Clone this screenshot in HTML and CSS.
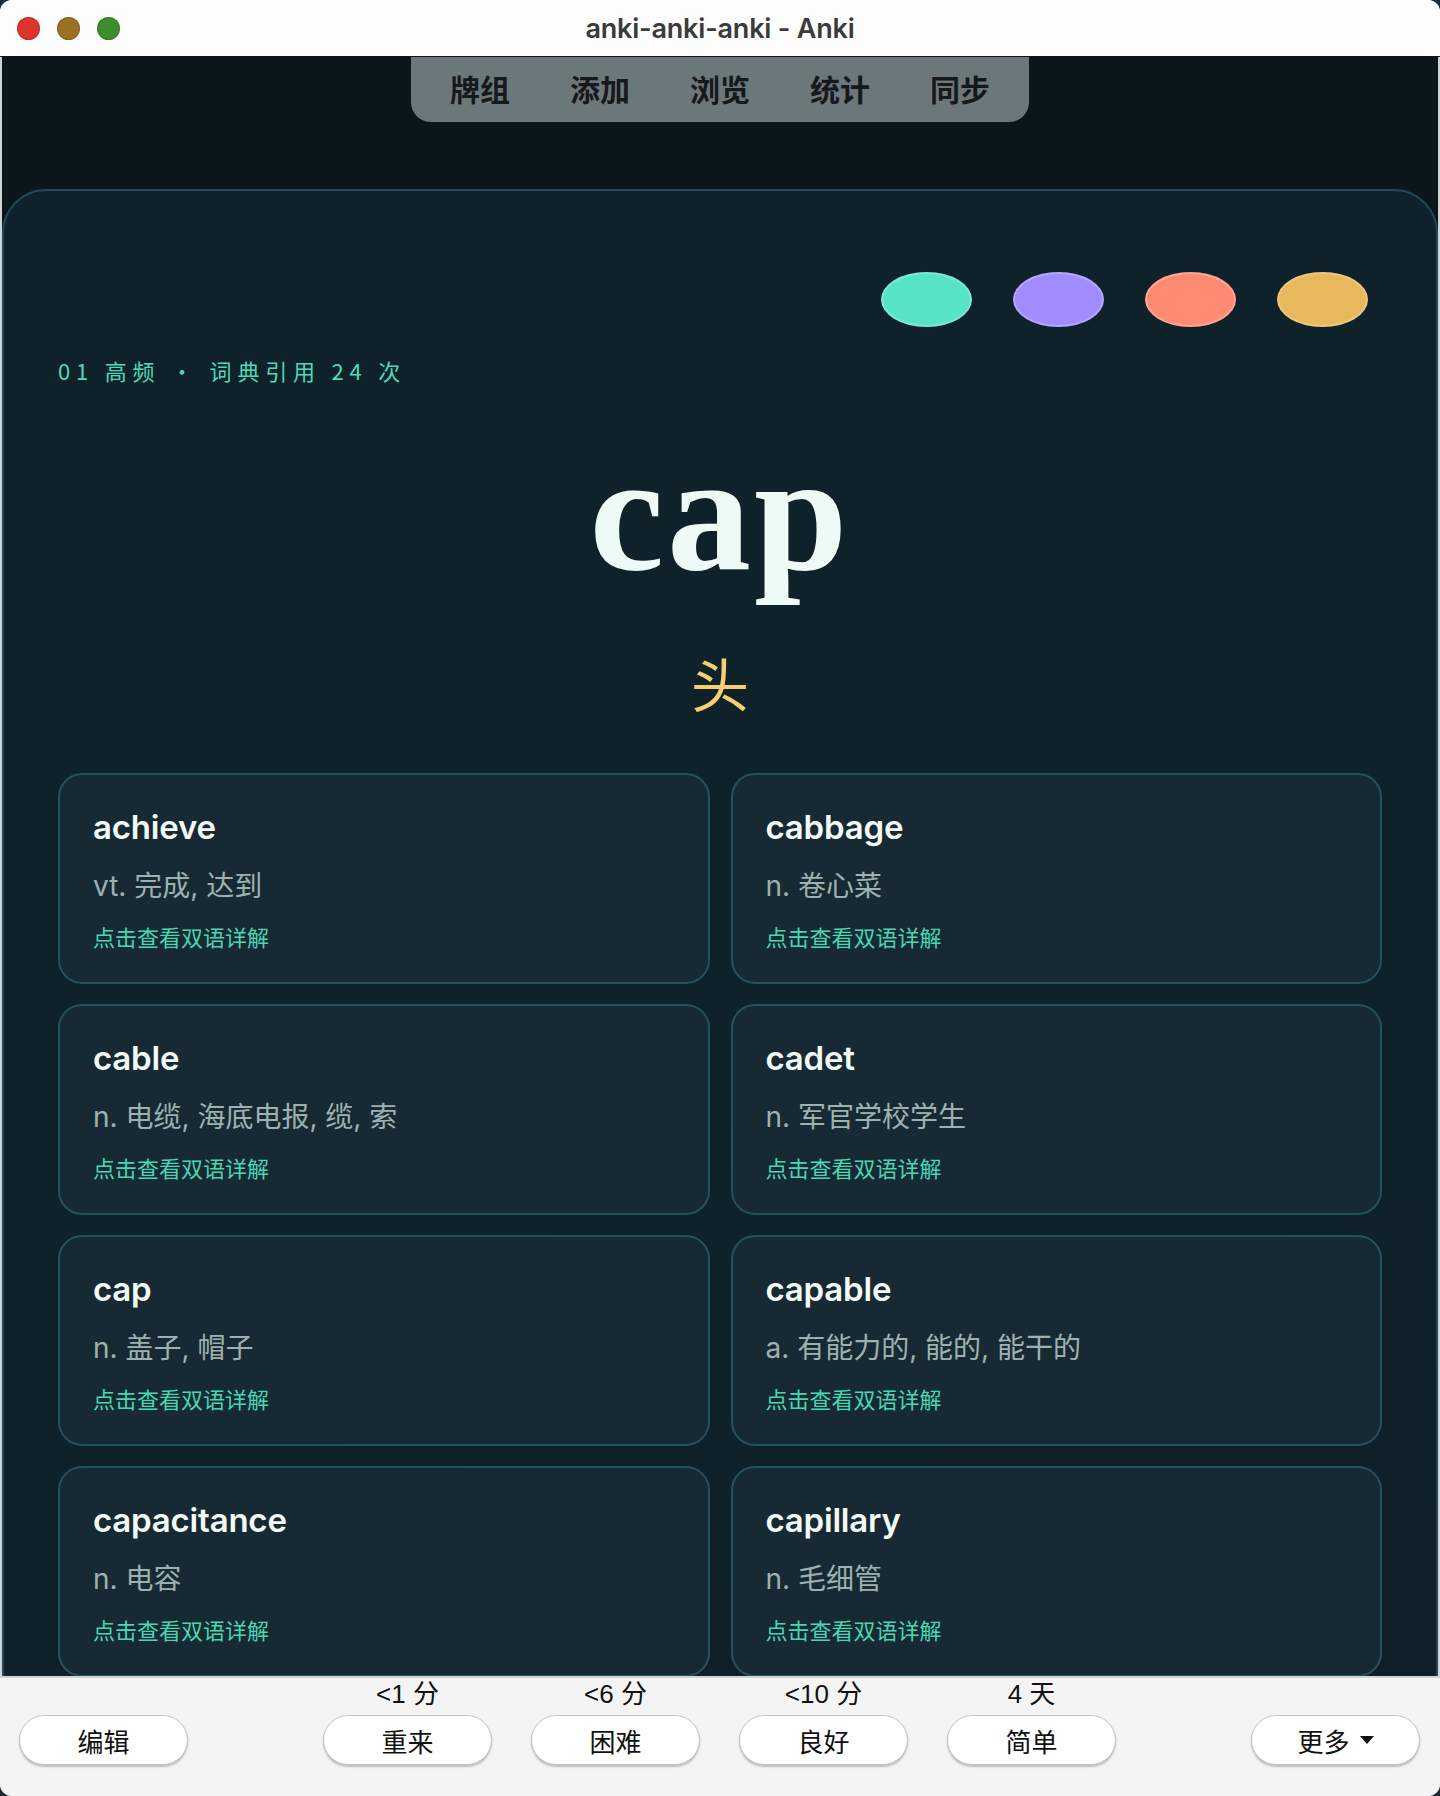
FILE: index.html
```html
<!DOCTYPE html>
<html>
    <head>
        <meta charset="utf-8">
        <title>anki-anki-anki - Anki</title>
        <link rel="stylesheet" href="styles.css">
    </head>

    <body>
        <div class="window">
            <header class="titlebar">
                <div class="lights">
                    <span class="light light-close"></span>
                    <span class="light light-min"></span>
                    <span class="light light-zoom"></span>
                </div>
                <div class="title">anki-anki-anki - Anki</div>
                <div></div>
            </header>

            <main class="webview">
                <nav class="toolbar">
                    <div class="toolbar-pill">
                        <a href="#">牌组</a>
                        <a href="#">添加</a>
                        <a href="#">浏览</a>
                        <a href="#">统计</a>
                        <a href="#">同步</a>
                    </div>
                </nav>

                <section class="note">
                    <div class="dots">
                        <span class="dot dot-teal"></span>
                        <span class="dot dot-violet"></span>
                        <span class="dot dot-coral"></span>
                        <span class="dot dot-amber"></span>
                    </div>

                    <div class="meta">01 高频 · 词典引用 24 次</div>

                    <h1 class="headword">cap</h1>
                    <div class="gloss">头</div>

                    <div class="related">
                        <div class="entry">
                            <div class="entry-word">achieve</div>
                            <div class="entry-def">vt. 完成, 达到</div>
                            <a class="entry-link" href="#">点击查看双语详解</a>
                        </div>
                        <div class="entry">
                            <div class="entry-word">cabbage</div>
                            <div class="entry-def">n. 卷心菜</div>
                            <a class="entry-link" href="#">点击查看双语详解</a>
                        </div>
                        <div class="entry">
                            <div class="entry-word">cable</div>
                            <div class="entry-def">n. 电缆, 海底电报, 缆, 索</div>
                            <a class="entry-link" href="#">点击查看双语详解</a>
                        </div>
                        <div class="entry">
                            <div class="entry-word">cadet</div>
                            <div class="entry-def">n. 军官学校学生</div>
                            <a class="entry-link" href="#">点击查看双语详解</a>
                        </div>
                        <div class="entry">
                            <div class="entry-word">cap</div>
                            <div class="entry-def">n. 盖子, 帽子</div>
                            <a class="entry-link" href="#">点击查看双语详解</a>
                        </div>
                        <div class="entry">
                            <div class="entry-word">capable</div>
                            <div class="entry-def">a. 有能力的, 能的, 能干的</div>
                            <a class="entry-link" href="#">点击查看双语详解</a>
                        </div>
                        <div class="entry">
                            <div class="entry-word">capacitance</div>
                            <div class="entry-def">n. 电容</div>
                            <a class="entry-link" href="#">点击查看双语详解</a>
                        </div>
                        <div class="entry">
                            <div class="entry-word">capillary</div>
                            <div class="entry-def">n. 毛细管</div>
                            <a class="entry-link" href="#">点击查看双语详解</a>
                        </div>
                    </div>
                </section>
            </main>

            <footer class="answerbar">
                <div class="bar-side">
                    <button class="btn">编辑</button>
                </div>

                <div class="answers">
                    <div class="answer">
                        <span class="due">&lt;1 分</span>
                        <button class="btn">重来</button>
                    </div>
                    <div class="answer">
                        <span class="due">&lt;6 分</span>
                        <button class="btn">困难</button>
                    </div>
                    <div class="answer">
                        <span class="due">&lt;10 分</span>
                        <button class="btn">良好</button>
                    </div>
                    <div class="answer">
                        <span class="due">4 天</span>
                        <button class="btn">简单</button>
                    </div>
                </div>

                <div class="bar-side bar-right">
                    <button class="btn">更多<span class="caret"></span></button>
                </div>
            </footer>
        </div>
    </body>
</html>
```

FILE: styles.css
```css
body {
    margin: 0;
    background-color: #1d2b35;
    font-family: "Inter", "Noto Sans CJK SC", sans-serif;
}

.window {
    width: 1440px;
    height: 1796px;
    border-radius: 12px;
    overflow: hidden;
    background-color: #cfd4d6;
    display: flex;
    flex-direction: column;
}

/* title bar */

.titlebar {
    flex: none;
    height: 56px;
    background-color: #fdfdfd;
    border-bottom: 1px solid #101417;
    display: grid;
    grid-template-columns: 1fr auto 1fr;
    align-items: center;
}

.lights {
    display: flex;
    gap: 17px;
    padding-left: 17px;
}

.light {
    width: 23px;
    height: 23px;
    border-radius: 50%;
    box-shadow: inset 0 0 0 1px rgba(0, 0, 0, 0.15);
}

.light-close { background-color: #e0342a; }
.light-min { background-color: #9c7023; }
.light-zoom { background-color: #3d8e2b; }

.title {
    font-family: "Inter", sans-serif;
    font-weight: 600;
    font-size: 27px;
    letter-spacing: -0.2px;
    color: #3b3b3b;
}

/* reviewer */

.webview {
    flex: none;
    height: 1619px;
    margin: 0 2px;
    overflow: hidden;
    background: linear-gradient(180deg, #0a161c 0%, #0c1c23 100%);
}

.toolbar {
    display: flex;
    justify-content: center;
    height: 65px;
}

.toolbar-pill {
    display: flex;
    align-items: center;
    gap: 60px;
    padding: 0 39px 4px;
    background-color: #6c777b;
    border-radius: 0 0 20px 20px;
}

.toolbar-pill a {
    font-family: "Noto Sans CJK SC", sans-serif;
    font-weight: 700;
    font-size: 30px;
    line-height: 1;
    color: #15191b;
    text-decoration: none;
}

.note {
    margin-top: 67px;
    padding: 81px 54px 0;
    min-height: 1600px;
    background: linear-gradient(160deg, #0f222a 0%, #0f2129 50%, #0e1f27 100%);
    border: 2px solid #24495a;
    border-radius: 44px;
}

.dots {
    display: flex;
    justify-content: flex-end;
    gap: 41px;
    padding-right: 14px;
}

.dot {
    width: 91px;
    height: 55px;
    border-radius: 50%;
    box-shadow: inset 0 0 0 2px rgba(255, 255, 255, 0.22);
}

.dot-teal { background-color: #57e4c4; }
.dot-violet { background-color: #a08cff; }
.dot-coral { background-color: #ff8b73; }
.dot-amber { background-color: #e8b85c; }

.meta {
    margin-top: 28px;
    font-family: "Noto Sans CJK SC", sans-serif;
    font-size: 22px;
    line-height: 30px;
    letter-spacing: 5.8px;
    color: #4fd9b9;
}

.headword {
    margin: 43px 0 0;
    font-family: "Liberation Serif", serif;
    font-weight: 700;
    font-size: 168px;
    line-height: 1;
    letter-spacing: 3px;
    text-align: center;
    color: #eefaf5;
}

.gloss {
    margin-top: 57px;
    font-family: "Noto Sans CJK SC", sans-serif;
    font-size: 58px;
    line-height: 1;
    text-align: center;
    color: #f8cf6e;
}

.related {
    margin-top: 62px;
    display: grid;
    grid-template-columns: 1fr 1fr;
    gap: 20px 21px;
}

.entry {
    display: flex;
    flex-direction: column;
    align-items: flex-start;
    padding: 32px 33px 31px;
    background-color: #172a33;
    border: 2px solid #26505c;
    border-radius: 24px;
}

.entry-word {
    font-weight: 600;
    font-size: 33px;
    line-height: 40px;
    letter-spacing: -0.2px;
    color: #f1faf7;
}

.entry-def {
    margin-top: 21px;
    font-size: 28px;
    line-height: 36px;
    color: #9db2b0;
}

.entry-link {
    margin-top: 17px;
    font-family: "Noto Sans CJK SC", sans-serif;
    font-size: 22px;
    line-height: 30px;
    color: #47d7b3;
    text-decoration: none;
}

/* answer buttons */

.answerbar {
    flex: 1;
    box-sizing: border-box;
    background-color: #f4f4f4;
    border-top: 2px solid #d2d2d2;
    display: grid;
    grid-template-columns: 1fr auto 1fr;
    align-items: end;
    padding: 0 20px 31px 19px;
}

.bar-right {
    display: flex;
    justify-content: flex-end;
}

.answers {
    display: flex;
    gap: 39px;
}

.answer {
    display: flex;
    flex-direction: column;
    align-items: center;
    gap: 6px;
}

.due {
    font-family: "Liberation Sans", "Noto Sans CJK SC", sans-serif;
    font-size: 26px;
    line-height: 30px;
    color: #111;
}

.btn {
    width: 169px;
    height: 50px;
    display: flex;
    align-items: center;
    justify-content: center;
    gap: 10px;
    padding: 0;
    background-color: #fff;
    border: 1px solid #c4c4c4;
    border-radius: 25px;
    box-shadow: 0 2px 2px rgba(0, 0, 0, 0.22);
    font-family: "Noto Sans CJK SC", sans-serif;
    font-size: 26px;
    color: #111;
    cursor: pointer;
}

.caret {
    width: 0;
    height: 0;
    border-left: 7px solid transparent;
    border-right: 7px solid transparent;
    border-top: 8px solid #111;
}
```
